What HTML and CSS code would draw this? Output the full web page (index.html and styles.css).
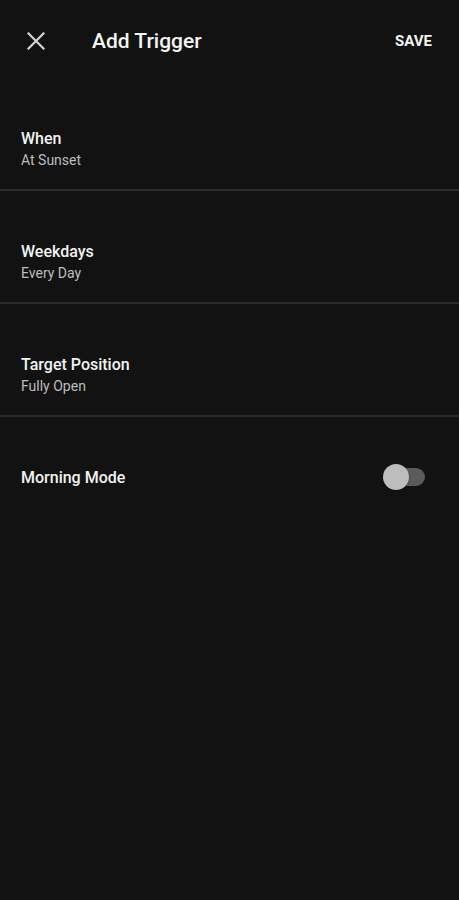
FILE: index.html
```html
<!DOCTYPE html>
<html lang="en">
<head>
    <meta charset="UTF-8">
    <meta name="viewport" content="width=device-width, initial-scale=1.0">
    <title>Add Trigger</title>
    <link rel="stylesheet" href="styles.css">
</head>
<body>
    <div class="screen">
        <div class="toolbar">
            <button class="close" aria-label="Close">
                <svg width="18" height="18" viewBox="0 0 18 18">
                    <path d="M1.5 1.5 L16.5 16.5 M16.5 1.5 L1.5 16.5" stroke="#d4d4d4" stroke-width="2.2" stroke-linecap="square" fill="none"/>
                </svg>
            </button>
            <h1 class="toolbar-title">Add Trigger</h1>
            <button class="save">SAVE</button>
        </div>

        <div class="setting">
            <div class="setting-title">When</div>
            <div class="setting-value">At Sunset</div>
        </div>
        <div class="divider"></div>

        <div class="setting">
            <div class="setting-title">Weekdays</div>
            <div class="setting-value">Every Day</div>
        </div>
        <div class="divider"></div>

        <div class="setting">
            <div class="setting-title">Target Position</div>
            <div class="setting-value">Fully Open</div>
        </div>
        <div class="divider"></div>

        <div class="setting setting-switch">
            <div class="setting-title">Morning Mode</div>
            <div class="switch">
                <div class="switch-track"></div>
                <div class="switch-thumb"></div>
            </div>
        </div>
    </div>
</body>
</html>
```

FILE: styles.css
```css
* {
    box-sizing: border-box;
}

html, body {
    margin: 0;
    padding: 0;
    background-color: #121212;
}

body {
    font-family: Roboto, "Liberation Sans", sans-serif;
    color: #f2f2f2;
    min-height: 900px;
}

.toolbar {
    display: flex;
    align-items: center;
    height: 78px;
    padding: 4px 27px 0 27px;
}

.close {
    display: flex;
    padding: 0;
    border: none;
    background: none;
    width: 18px;
    height: 18px;
}

.toolbar-title {
    margin: 0 0 0 47px;
    font-size: 21px;
    font-weight: 500;
    line-height: 24px;
    color: #f5f5f5;
    flex: 1;
}

.save {
    padding: 0;
    border: none;
    background: none;
    font-family: inherit;
    font-size: 15px;
    font-weight: 700;
    color: #f2f2f2;
}

.setting {
    height: 111px;
    padding: 51px 34px 0 21px;
}

.setting-title {
    font-size: 16px;
    font-weight: 500;
    line-height: 20px;
    color: #f2f2f2;
}

.setting-value {
    margin-top: 2px;
    font-size: 14px;
    line-height: 18px;
    color: #bdbdbd;
}

.divider {
    height: 2px;
    background-color: #2c2c2c;
}

.setting-switch {
    display: flex;
    justify-content: space-between;
    align-items: flex-start;
}

.switch {
    position: relative;
    width: 42px;
    height: 26px;
    margin-top: -4px;
}

.switch-track {
    margin: 4px 0 0 9px;
    width: 33px;
    height: 18px;
    border-radius: 9px;
    background-color: #5b5b5b;
}

.switch-thumb {
    position: absolute;
    left: 0;
    top: 0;
    width: 26px;
    height: 26px;
    border-radius: 50%;
    background-color: #bdbdbd;
    box-shadow: 0 1px 2px rgba(0, 0, 0, 0.4);
}
```
